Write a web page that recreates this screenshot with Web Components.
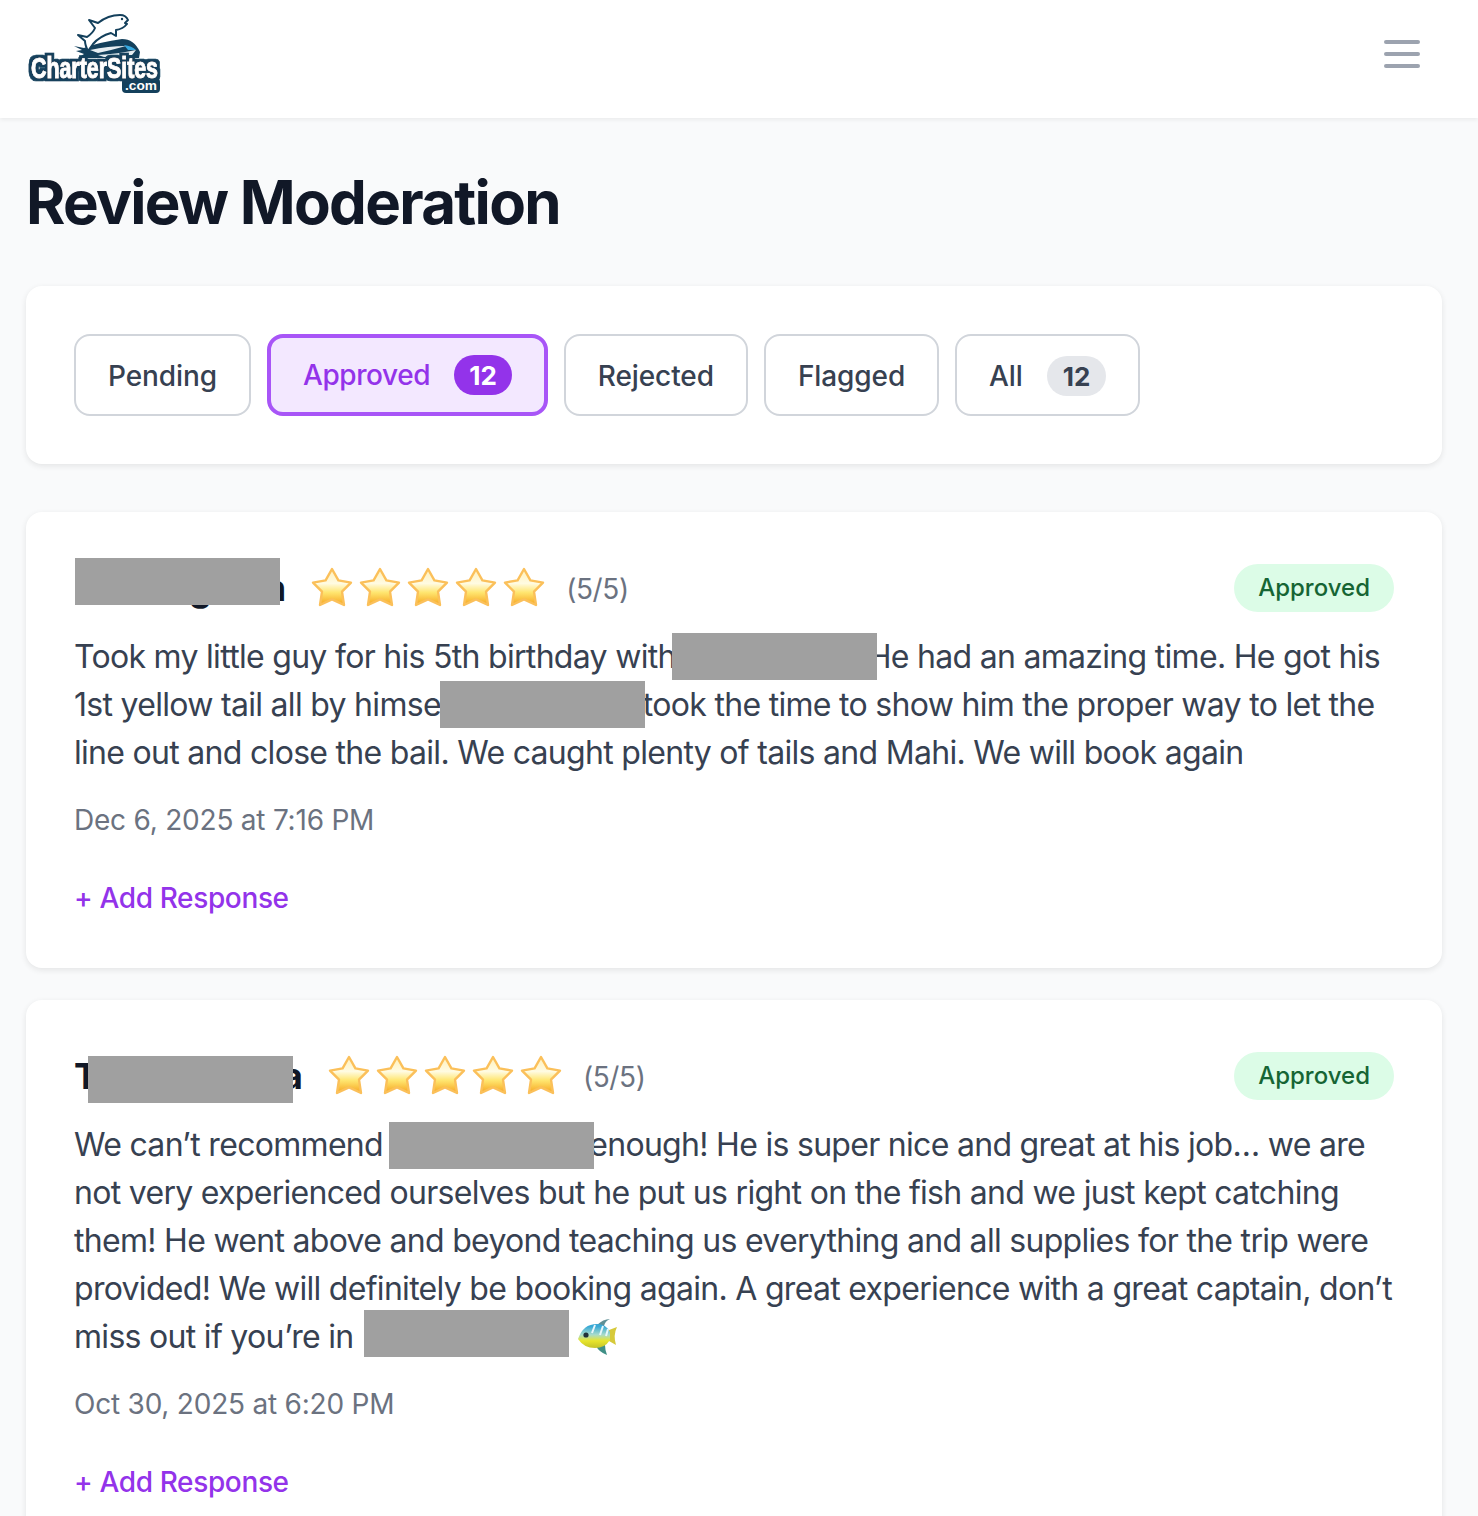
<!DOCTYPE html>
<html>
<head>
<meta charset="utf-8">
<style>
  html, body { margin: 0; padding: 0; }
  body { background: #f9fafb; font-family: Inter, "Liberation Sans", sans-serif; color: #374151; height: 1516px; overflow: hidden; }
</style>
</head>
<body>
<app-header></app-header>
<main-page>
  <filter-bar></filter-bar>
  <review-card date="Dec 6, 2025 at 7:16 PM">
    <span slot="name"><black-out gap="115" cover="205" start="1" top="-43"></black-out>g<black-out gap="52"></black-out>n</span>
    Took my little guy for his 5th birthday with<black-out gap="192" cover="205" start="-4" top="-35"></black-out>He had an amazing time. He got his 1st yellow tail all by himse<black-out gap="202" cover="205" start="-1" top="-35"></black-out>took the time to show him the proper way to let the line out and close the bail. We caught plenty of tails and Mahi. We will book again
  </review-card>
  <review-card date="Oct 30, 2025 at 6:20 PM">
    <span slot="name">T<black-out gap="184" cover="205" start="-10" top="-33"></black-out>a</span>
    We can’t recommend <black-out gap="198" cover="205" start="-2" top="-34"></black-out>enough! He is super nice and great at his job… we are not very experienced ourselves but he put us right on the fish and we just kept catching them! He went above and beyond teaching us everything and all supplies for the trip were provided! We will definitely be booking again. A great experience with a great captain, don’t miss out if you’re in <black-out gap="205" cover="205" start="2" top="-38"></black-out> <fish-icon></fish-icon>
  </review-card>
</main-page>

<script>
// logo and hamburger bar
var headerTpl = document.createElement("template");
headerTpl.innerHTML = `
<style>
  :host { display: flex; align-items: center; justify-content: space-between; height: 118px; padding: 0 58px 0 26px; background: #fff; box-shadow: 0 2px 4px rgba(0,0,0,.06); position: relative; }
  .logo { display: block; width: 140px; height: 100px; }
  .logo text { font-family: "Liberation Sans", sans-serif; font-weight: 700; }
  .menu { display: flex; flex-direction: column; gap: 8px; width: 36px; margin-top: -10px; }
  .menu i { display: block; height: 4px; border-radius: 2px; background: #9ca3af; }
</style>
<svg class="logo" viewBox="26 9 140 100">
  <defs>
    <filter id="blob" x="-5%" y="-20%" width="110%" height="140%">
      <feMorphology in="SourceAlpha" operator="dilate" radius="2.6" result="fat"/>
      <feFlood flood-color="#14405c"/>
      <feComposite in2="fat" operator="in" result="edge"/>
      <feMerge><feMergeNode in="edge"/><feMergeNode in="SourceGraphic"/></feMerge>
    </filter>
  </defs>
  <path d="M74 46 L84 48 Q100 42 122 39 Q134 39 140 52 L139 58 L78 58 L84 54 L76 51 L82 50 Z" fill="#14405c"/>
  <path d="M90 50 Q108 46 126 46 Q112 50 98 53 Z M98 55 Q118 54 136 50 L132 55 L104 57 Z" fill="#e7eef2"/>
  <path d="M124 45 Q132 46 136 50 L128 50 Z" fill="#36a9e1"/>
  <path d="M89 20 L98 23 Q108 15 120 15 Q126 15 128 20 L125 23 L127 24 Q123 29 116 30 L116 36 L111 33 Q100 36 93 44 L88 51 Q85 45 85 41 L78 35 L87 37 Q93 33 95 28 Z" fill="#fff" stroke="#14405c" stroke-width="2" stroke-linejoin="round"/>
  <circle cx="122" cy="19" r="1.2" fill="#14405c"/>
  <rect x="122" y="78" width="38" height="15" rx="4" fill="#14405c"/>
  <text x="31" y="78" font-size="29" fill="#fff" stroke="#fff" stroke-width=".7" filter="url(#blob)" textLength="127" lengthAdjust="spacingAndGlyphs">CharterSites</text>
  <text x="125" y="90" font-size="13" fill="#fff" textLength="32" lengthAdjust="spacingAndGlyphs">.com</text>
</svg>
<div class="menu"><i></i><i></i><i></i></div>
`;
class AppHeader extends HTMLElement {
  constructor(){
    super();
    this.attachShadow({mode:"open"}).appendChild(headerTpl.content.cloneNode(true));
  }
}
customElements.define("app-header", AppHeader);

// page column with the title
var pageTpl = document.createElement("template");
pageTpl.innerHTML = `
<style>
  :host { display: block; padding: 49px 36px 0 26px; }
  h1 { margin: 0 0 48px; font-size: 60px; line-height: 71px; font-weight: 700; color: #111827; letter-spacing: -1.7px; }
  .list { display: flex; flex-direction: column; }
</style>
<h1>Review Moderation</h1>
<div class="list"><slot></slot></div>
`;
class MainPage extends HTMLElement {
  constructor(){
    super();
    this.attachShadow({mode:"open"}).appendChild(pageTpl.content.cloneNode(true));
  }
}
customElements.define("main-page", MainPage);

// tabs
var filterTpl = document.createElement("template");
filterTpl.innerHTML = `
<style>
  :host { display: flex; gap: 16px; padding: 48px; margin-bottom: 48px; background: #fff; border-radius: 16px; box-shadow: 0 2px 6px rgba(0,0,0,.09); }
  .tab { box-sizing: border-box; height: 82px; display: flex; align-items: center; gap: 24px; padding: 2px 32px 0; border: 2px solid #d1d5db; border-radius: 16px; background: #fff; font-size: 28px; font-weight: 500; color: #374151; letter-spacing: -0.1px; }
  .tab.on { border: 4px solid #a855f7; background: #f3e8ff; color: #9333ea; letter-spacing: -0.4px; padding-top: 0; }
  .num { display: flex; align-items: center; justify-content: center; height: 40px; padding: 0 16px; border-radius: 20px; background: #e5e7eb; color: #374151; font-size: 26px; font-weight: 700; letter-spacing: 0; }
  .on .num { background: #9333ea; color: #fff; padding: 0 15px; }
</style>
<div class="tab">Pending</div>
<div class="tab on">Approved <span class="num">12</span></div>
<div class="tab">Rejected</div>
<div class="tab">Flagged</div>
<div class="tab">All <span class="num">12</span></div>
`;
class FilterBar extends HTMLElement {
  constructor(){
    super();
    this.attachShadow({mode:"open"}).appendChild(filterTpl.content.cloneNode(true));
  }
}
customElements.define("filter-bar", FilterBar);

// grey box laid over the text, gap = room it takes in the line
class BlackOut extends HTMLElement {
  constructor(){
    super();
    this.attachShadow({mode:"open"});
  }
  connectedCallback(){
    var gap = this.getAttribute("gap") || 0;
    var cover = this.getAttribute("cover");
    var start = this.getAttribute("start") || 0;
    var top = this.getAttribute("top") || -36;
    var box = cover ? `<div style="position:absolute;left:${start}px;top:${top}px;width:${cover}px;height:47px;background:#a0a0a0;z-index:2"></div>` : "";
    this.shadowRoot.innerHTML = `<style>:host{display:inline-block;position:relative;width:${gap}px;height:0}</style>${box}`;
  }
}
customElements.define("black-out", BlackOut);

class StarIcon extends HTMLElement {
  constructor(){
    super();
    this.attachShadow({mode:"open"}).innerHTML = `
    <style>:host{display:block;width:44px;height:42px}svg{display:block}</style>
    <svg width="44" height="42" viewBox="0 0 44 42">
      <defs><linearGradient id="g" x1="0" y1="0" x2="0" y2="1">
        <stop offset="0.1" stop-color="#fff3c4"/><stop offset="0.4" stop-color="#fffbe2"/><stop offset="0.65" stop-color="#ffe670"/><stop offset="1" stop-color="#f6a51f"/>
      </linearGradient></defs>
      <path d="M22 3 L28.4 14.4 L41 16.6 L32 25.6 L34 39 L22 33.4 L10 39 L12 25.6 L3 16.6 L15.6 14.4 Z" fill="url(#g)" stroke="#fbc05a" stroke-width="2.4" stroke-linejoin="round"/>
    </svg>`;
  }
}
customElements.define("star-icon", StarIcon);

class FishIcon extends HTMLElement {
  constructor(){
    super();
    this.attachShadow({mode:"open"}).innerHTML = `
    <style>:host{display:inline-block;width:42px;height:38px;vertical-align:-8px;margin-left:2px}svg{display:block}</style>
    <svg width="42" height="38" viewBox="0 0 42 38">
      <defs><linearGradient id="f" x1="0" y1="0" x2="0" y2="1">
        <stop offset="0.1" stop-color="#37a8d6"/><stop offset="0.45" stop-color="#a9dccb"/><stop offset="0.7" stop-color="#e8e52c"/><stop offset="1" stop-color="#c4c42a"/>
      </linearGradient></defs>
      <path d="M20 7 Q26 1 33 1 Q28 3 27 8 Z" fill="#5f8f95"/>
      <path d="M19 28 Q22 34 30 37 Q28 32 28 27 Z" fill="#3f8f86"/>
      <path d="M32 12 L40 9 Q36 17 39 27 L32 23 Z" fill="#d6c93a"/>
      <path d="M1 21 Q6 6 20 6 Q29 6 33 14 L33 22 Q28 30 18 30 Q7 30 1 21 Z" fill="url(#f)"/>
      <path d="M18 7 L15 15 M26 8 L23 17 M31 11 L29 18" stroke="#e8f7fb" stroke-width="2"/>
      <circle cx="9" cy="17" r="2.6" fill="#20303a"/>
    </svg>`;
  }
}
customElements.define("fish-icon", FishIcon);

// one review
var cardTpl = document.createElement("template");
cardTpl.innerHTML = `
<style>
  :host { display: block; padding: 48px 48px 50px; margin-bottom: 32px; background: #fff; border-radius: 16px; box-shadow: 0 2px 6px rgba(0,0,0,.09); }
  .top { display: flex; justify-content: space-between; align-items: center; height: 56px; margin-bottom: 17px; }
  .who { display: flex; align-items: center; }
  .name { font-size: 36px; font-weight: 700; color: #111827; line-height: 48px; margin-right: 24px; white-space: nowrap; }
  .stars { display: flex; gap: 4px; margin-top: -2px; }
  .score { margin-left: 20px; margin-top: 2px; font-size: 28px; color: #6b7280; letter-spacing: -0.4px; }
  .badge { box-sizing: border-box; display: flex; align-items: center; height: 48px; padding: 0 24px 2px; border-radius: 24px; background: #dcfce7; color: #166534; font-size: 24px; font-weight: 500; }
  .text { margin: 0; font-size: 32px; line-height: 48px; color: #374151; letter-spacing: -0.7px; }
  .date { margin-top: 23px; font-size: 28px; line-height: 40px; color: #6b7280; letter-spacing: -0.22px; }
  .add { margin-top: 38px; font-size: 28px; line-height: 40px; font-weight: 500; color: #9333ea; letter-spacing: -0.36px; }
</style>
<div class="top">
  <div class="who">
    <div class="name"><slot name="name"></slot></div>
    <div class="stars"><star-icon></star-icon><star-icon></star-icon><star-icon></star-icon><star-icon></star-icon><star-icon></star-icon></div>
    <div class="score">(5/5)</div>
  </div>
  <div class="badge">Approved</div>
</div>
<p class="text"><slot></slot></p>
<div class="date"></div>
<div class="add">+ Add Response</div>
`;
class ReviewCard extends HTMLElement {
  constructor(){
    super();
    this.attachShadow({mode:"open"}).appendChild(cardTpl.content.cloneNode(true));
  }
  connectedCallback(){
    this.shadowRoot.querySelector(".date").textContent = this.getAttribute("date");
  }
}
customElements.define("review-card", ReviewCard);
</script>
</body>
</html>
